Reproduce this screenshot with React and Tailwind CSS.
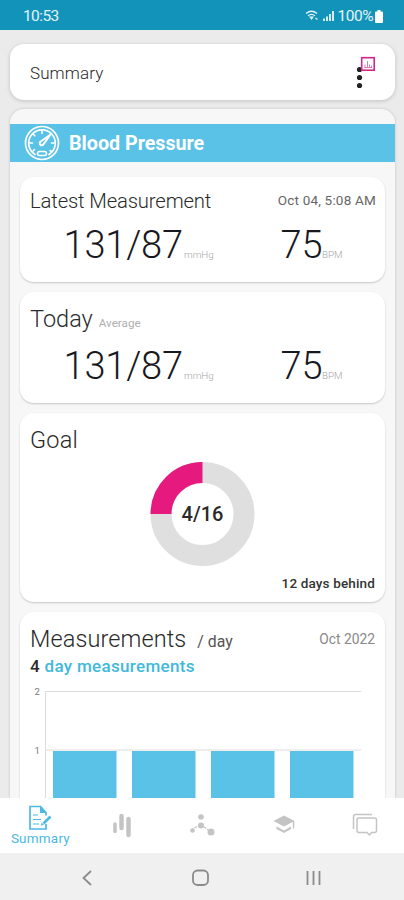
import React from 'react'

const bars = [53, 132, 211, 290]

const Card = ({ className = '', children }) => (
  <section className={`rounded-[14px] bg-white shadow-[0_1px_2px_rgba(0,0,0,0.2)] ${className}`}>{children}</section>
)

const StatusBar = () => (
  <div className="flex h-[30px] shrink-0 items-center justify-between bg-[#1193ba] pl-[23px] pr-[21px] pt-[2px] text-[15.5px] leading-[20px] text-white/90">
    <span className="tracking-[-0.6px]">10:53</span>
    <div className="flex items-center">
      <svg width="32" height="14" viewBox="0 0 32 14" fill="none">
        <path d="M1 4.500Q6.500 0 12 4.500M3 6.700Q6.500 3.900 10 6.700" stroke="currentColor" strokeWidth="1.300" />
        <path d="M4 7.500L6.500 11L9 7.500Z" fill="currentColor" />
        <path d="M10.500 9L12.500 10.500" stroke="currentColor" strokeWidth="1.200" />
        <path d="M19 12V9.500M22 12V7.500M25 12V5M28 12V2" stroke="currentColor" strokeWidth="1.800" />
      </svg>
      <span className="ml-[1px] tracking-[-0.5px]">100%</span>
      <svg className="ml-[2px]" width="8" height="13" viewBox="0 0 8 13" fill="white">
        <path d="M2.500 0h3v1.500H7q1 0 1 1V12q0 1-1 1H1q-1 0-1-1V2.500q0-1 1-1h1.500z" />
      </svg>
    </div>
  </div>
)

const Gauge = () => (
  <svg width="36" height="36" viewBox="0 0 36 36" fill="none" stroke="white" strokeLinecap="round">
    <circle cx="18" cy="18" r="16.500" strokeWidth="1.700" />
    <path d="M11 29.500A13.300 13.300 0 1 1 25 29.500" strokeWidth="1.700" />
    <path d="M18 5.500v3M9 9l1.800 1.800M5.500 18h3M9 26l1.500-1.500M27.500 18h3M26 25.500l1.500 1" strokeWidth="1.600" />
    <path d="M26.500 9.500L19.500 19.200A2 2 0 1 1 16.800 16.500Z" strokeWidth="2" />
    <rect x="13.500" y="26.500" width="9" height="4" rx="2" strokeWidth="1.600" />
  </svg>
)

const Reading = ({ className }) => (
  <div className={`flex items-baseline text-[38px] leading-[44px] font-light text-[#17191e] ${className}`}>
    <span className="ml-[33.5px] w-[120.5px] whitespace-nowrap tracking-[-0.2px]">131/87</span>
    <span className="w-[96.5px] text-[9.8px] leading-none text-[#a5a5a5]">mmHg</span>
    <span className="w-[41.5px]">75</span>
    <span className="text-[9.8px] leading-none text-[#a5a5a5]">BPM</span>
  </div>
)

const Goal = () => (
  <Card className="h-[189px] shrink-0 px-[10px] pt-[13px]">
    <h2 className="text-[23.5px] leading-[28px] font-light tracking-[0.2px]">Goal</h2>
    <div className="mt-[8px] grid place-items-center">
      <svg className="col-start-1 row-start-1" width="105" height="104" viewBox="0 0 105 104" fill="none" strokeWidth="21">
        <circle cx="52.500" cy="52" r="41.500" stroke="#dfdfdf" />
        <path d="M11 52A41.500 41.500 0 0 1 52.500 10.500" stroke="#e6197f" />
      </svg>
      <span className="col-start-1 row-start-1 text-[20px] font-medium leading-[24px]">4/16</span>
    </div>
    <p className="mt-[7px] text-right text-[13.5px] leading-[20px] font-medium tracking-[0.15px] text-[#333]">12 days behind</p>
  </Card>
)

const Chart = () => (
  <svg className="-mx-[10px] mt-[4px]" width="365" height="120" viewBox="20 680 365 120">
    <path d="M45.500 800V691.500H361M45 750H361" fill="none" stroke="#dcdcdc" />
    {bars.map((x) => (
      <rect key={x} x={x} y="751" width="63.500" height="50" fill="#5ac2e7" />
    ))}
    <text x="34.500" y="694.500" fontSize="9.500" fill="#777">2</text>
    <text x="34.500" y="754" fontSize="9.500" fill="#777">1</text>
  </svg>
)

const TabBar = () => (
  <nav className="grid h-[55px] shrink-0 grid-cols-5 bg-white text-[#c4c4c4]">
    <div className="flex flex-col items-center pt-[7px] text-[#4bb9e2]">
      <svg width="24" height="26" viewBox="0 0 24 26" fill="none" stroke="currentColor" strokeWidth="1.700">
        <path d="M18 10.500V7.500L12.500 1.500H2V24H18V19" />
        <path d="M12 1.500V8H18.500Z" fill="currentColor" stroke="none" />
        <path d="M5 10h5M5 14.500h8M5 19h6" strokeWidth="1.200" />
        <path d="M22.500 11.500L15.500 18.500" strokeWidth="2.600" />
        <path d="M13 20.500l.5-3 2.500 2.500z" fill="currentColor" stroke="none" />
      </svg>
      <span className="text-[13.5px] leading-[15px] tracking-[0.2px]">Summary</span>
    </div>
    <div className="flex justify-center pl-[2px] pt-[14px]">
      <svg width="20" height="26" viewBox="0 0 20 26" stroke="currentColor" strokeLinecap="round">
        <path d="M3 12V19.500" strokeWidth="3.500" />
        <path d="M9.500 4V16" strokeWidth="4.500" />
        <path d="M16.500 7V23" strokeWidth="4.500" />
      </svg>
    </div>
    <div className="flex justify-center pl-[1px] pt-[14px]">
      <svg width="26" height="26" viewBox="0 0 26 26" fill="currentColor">
        <path d="M11.500 12.500L22 20M11.500 12.500L4 17" stroke="currentColor" strokeWidth="1.200" strokeDasharray="3 1" />
        <circle cx="12" cy="5" r="2.800" />
        <circle cx="12" cy="13.500" r="3" />
        <circle cx="3.500" cy="18.500" r="2.300" />
        <circle cx="22" cy="20" r="3.500" />
      </svg>
    </div>
    <div className="flex justify-center pl-[3px] pt-[17px]">
      <svg width="22" height="20" viewBox="0 0 22 20" fill="currentColor">
        <path d="M11 0.500L21.500 6L11 11.500L0.500 6Z" />
        <path d="M3.500 11.500L11 15.500L18 11.500V14L11 18L3.500 14Z" />
        <path d="M20.500 6V13.500" stroke="currentColor" strokeWidth="1.400" />
      </svg>
    </div>
    <div className="flex justify-center pl-[2px] pt-[15px]">
      <svg width="26" height="24" viewBox="0 0 26 24" fill="none" stroke="currentColor" strokeWidth="1.500">
        <path d="M1.500 16V3.500Q1.500 1.500 3.500 1.500H20" />
        <path d="M7 5H22.500Q24.500 5 24.500 7V17.500Q24.500 19.500 22.500 19.500H19.500L17.500 22L15 19.500H7Q5 19.500 5 17.500V7Q5 5 7 5Z" />
      </svg>
    </div>
  </nav>
)

const App = () => (
  <div className="flex h-[900px] w-[404px] flex-col overflow-hidden bg-[#ebebeb] font-['Roboto',sans-serif] text-[#2a2a2a]">
    <StatusBar />

    <main className="flex min-h-0 flex-1 flex-col overflow-hidden px-[10px] pt-[14px]">
      <header className="flex h-[56px] w-[385px] shrink-0 items-center justify-between rounded-[14px] bg-white px-[20px] shadow-[0_1px_4px_rgba(0,0,0,0.18)]">
        <h1 className="pt-[2px] text-[17px] font-light leading-[20px] tracking-[0.1px]">Summary</h1>
        <svg width="20" height="34" viewBox="0 0 20 34">
          <g fill="#222">
            <circle cx="4.500" cy="14.500" r="2.600" />
            <circle cx="4.500" cy="22.500" r="2.600" />
            <circle cx="4.500" cy="30.500" r="2.600" />
          </g>
          <rect x="6.700" y="2.700" width="12.500" height="12.500" fill="white" stroke="#d5248c" strokeWidth="1.600" />
          <path d="M10 12.500V9.500M12.500 12.500V6M14.500 9.500V12.500M16.500 12.500V10.500M9.500 12.500H17" stroke="#e07ab2" strokeWidth="1" />
        </svg>
      </header>

      <div className="mt-[9px] flex min-h-0 w-[385px] flex-1 flex-col overflow-hidden rounded-t-[14px] bg-[#f7f7f7] shadow-[0_0_3px_rgba(0,0,0,0.18)]">
        <div className="mt-[14.5px] flex h-[38px] shrink-0 items-center bg-[#5ac2e7] pl-[14px] text-white">
          <Gauge />
          <h2 className="ml-[9px] pt-[2px] text-[19.7px] font-bold leading-[24px]">Blood Pressure</h2>
        </div>

        <div className="flex flex-col gap-[10px] px-[10px] pt-[15.5px]">
          <Card className="h-[105px] shrink-0 px-[10px] pt-[12px]">
            <div className="flex items-start justify-between">
              <h2 className="text-[20.3px] font-light leading-[24px] tracking-[-0.15px]">Latest Measurement</h2>
              <span className="-mr-[1px] pt-[2px] text-[13.5px] leading-[18px] tracking-[0.2px] text-[#666]">Oct 04, 5:08 AM</span>
            </div>
            <Reading className="mt-[10px]" />
          </Card>

          <Card className="h-[111px] shrink-0 px-[10px] pt-[13px]">
            <div className="flex items-baseline gap-[6px]">
              <h2 className="text-[23.5px] font-light leading-[28px]">Today</h2>
              <span className="text-[11.7px] leading-none text-[#b0b0b0]">Average</span>
            </div>
            <Reading className="mt-[11px]" />
          </Card>

          <Goal />

          <Card className="h-[260px] shrink-0 px-[10px] pt-[13px]">
            <div className="flex items-start justify-between">
              <div className="flex items-baseline">
                <h2 className="text-[23.5px] font-light leading-[28px] tracking-[0.1px]">Measurements</h2>
                <span className="ml-[11px] text-[15.8px] leading-none text-[#555]">/ day</span>
              </div>
              <span className="pt-[5px] text-[13.8px] leading-[18px] text-[#888]">Oct 2022</span>
            </div>
            <p className="mt-[3px] text-[17px] font-medium leading-[20px] tracking-[0.32px]">
              4 <span className="text-[#41b9dc]">day measurements</span>
            </p>
            <Chart />
          </Card>
        </div>
      </div>
    </main>

    <TabBar />

    <div className="flex h-[47px] shrink-0 items-center bg-[#f0f0f0] pt-[3px]">
      <svg width="404" height="24" viewBox="0 0 404 24" fill="none" stroke="#8b8b8b" strokeWidth="1.800">
        <path d="M91 5L83.500 12L91 19" />
        <rect x="193" y="4.500" width="15" height="14.500" rx="4.500" />
        <path d="M307.500 5V19M313.500 5V19M319.500 5V19" />
      </svg>
    </div>
  </div>
)

export default App
